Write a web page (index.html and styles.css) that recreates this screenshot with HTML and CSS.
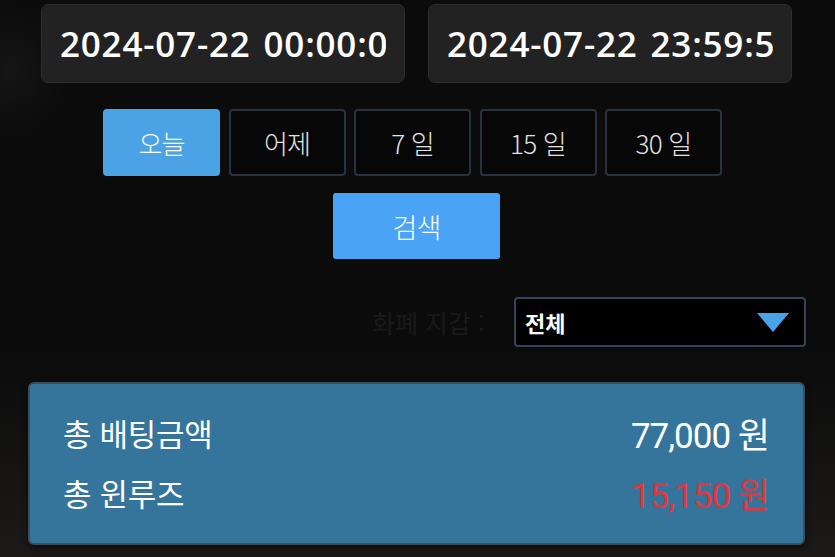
FILE: index.html
```html
<!DOCTYPE html>
<html lang="ko">
<head>
<meta charset="utf-8">
<title>베팅 내역</title>
<link rel="stylesheet" href="styles.css">
</head>
<body>
<main class="page">
  <section class="dates">
    <input class="date-input" type="text" value="2024-07-22 00:00:00" readonly>
    <input class="date-input" type="text" value="2024-07-22 23:59:59" readonly>
  </section>

  <nav class="periods">
    <button class="period active">오늘</button>
    <button class="period">어제</button>
    <button class="period">7 일</button>
    <button class="period">15 일</button>
    <button class="period">30 일</button>
  </nav>

  <div class="search-row">
    <button class="search">검색</button>
  </div>

  <div class="wallet-row">
    <span class="wallet-label">화폐 지갑 :</span>
    <div class="select">
      <span class="select-value">전체</span>
      <svg class="select-arrow" width="32" height="19" viewBox="0 0 32 19"><polygon points="0,0 32,0 16,19" fill="#4aa3e6"/></svg>
    </div>
  </div>

  <section class="summary">
    <div class="summary-row">
      <span class="summary-label">총 배팅금액</span>
      <span class="summary-value">77,000 원</span>
    </div>
    <div class="summary-row">
      <span class="summary-label">총 윈루즈</span>
      <span class="summary-value loss">15,150 원</span>
    </div>
  </section>
</main>
</body>
</html>
```

FILE: styles.css
```css
html, body {
  margin: 0;
  padding: 0;
}

body {
  width: 835px;
  height: 557px;
  overflow: hidden;
  background:
    radial-gradient(ellipse 60px 70px at 10px 70px, rgba(40,40,40,0.35), transparent),
    linear-gradient(to bottom, #0b0b0b 0%, #0b0b0b 62%, #151413 85%, #1c1a18 100%);
  font-family: "Noto Sans CJK KR", "Noto Sans", sans-serif;
  color: #fff;
}

.page {
  display: flex;
  flex-direction: column;
  padding-top: 4px;
}

/* date inputs */
.dates {
  display: flex;
  gap: 23px;
  padding-left: 41px;
}

.date-input {
  box-sizing: border-box;
  width: 364px;
  height: 79px;
  padding: 0 18px;
  margin: 0;
  background: #222222;
  border: 1px solid #2d2d2d;
  border-radius: 7px;
  color: #ffffff;
  font-family: "Open Sans", "Liberation Sans", sans-serif;
  font-weight: 600;
  font-size: 35px;
  letter-spacing: 0.8px;
  word-spacing: 3px;
  outline: none;
}

/* period buttons */
.periods {
  display: flex;
  gap: 8.5px;
  padding-left: 103px;
  margin-top: 26px;
}

.period {
  box-sizing: border-box;
  width: 117px;
  height: 67px;
  margin: 0;
  padding: 0;
  background: #070707;
  border: 2px solid #29313f;
  border-radius: 4px;
  color: #e2e2e2;
  font-family: "Noto Sans CJK KR", sans-serif;
  font-weight: 300;
  font-size: 26px;
  letter-spacing: -0.8px;
}

.period.active {
  background: #4ba3e6;
  border-color: #4ba3e6;
  color: #ffffff;
}

/* search */
.search-row {
  display: flex;
  padding-left: 333px;
  margin-top: 17px;
}

.search {
  box-sizing: border-box;
  width: 167px;
  height: 66px;
  margin: 0;
  padding: 0;
  background: #4aa3f5;
  border: none;
  border-radius: 3px;
  color: #ffffff;
  font-family: "Noto Sans CJK KR", sans-serif;
  font-weight: 300;
  font-size: 27px;
  letter-spacing: -0.8px;
}

/* wallet select */
.wallet-row {
  display: flex;
  align-items: center;
  justify-content: flex-end;
  gap: 29px;
  padding-right: 29px;
  margin-top: 38px;
}

.wallet-label {
  color: #1a1a1a;
  font-size: 25px;
  font-weight: 400;
  letter-spacing: 0;
}

.select {
  box-sizing: border-box;
  width: 292px;
  height: 50px;
  display: flex;
  align-items: center;
  justify-content: space-between;
  padding: 0 15px 0 9px;
  background: #000000;
  border: 2px solid #36415a;
  border-radius: 4px;
}

.select-value {
  font-size: 22px;
  font-weight: 700;
  color: #ffffff;
}

.select-arrow {
  display: block;
}

/* summary */
.summary {
  box-sizing: border-box;
  margin: 35px 30px 0 28px;
  height: 163px;
  padding: 18px 34px 0 33px;
  background: #35759b;
  border: 2px solid #3c4c58;
  border-radius: 6px;
  box-shadow: 0 2px 6px rgba(0,0,0,0.6);
}

.summary-row {
  display: flex;
  justify-content: space-between;
  align-items: center;
  height: 60px;
}

.summary-label {
  font-size: 31px;
  font-weight: 400;
  color: #ffffff;
  letter-spacing: -0.3px;
}

.summary-value {
  font-family: Roboto, "Noto Sans CJK KR", sans-serif;
  font-size: 35px;
  font-weight: 400;
  letter-spacing: -1px;
  color: #ffffff;
}

.summary-value.loss {
  color: #e2353c;
}
```
